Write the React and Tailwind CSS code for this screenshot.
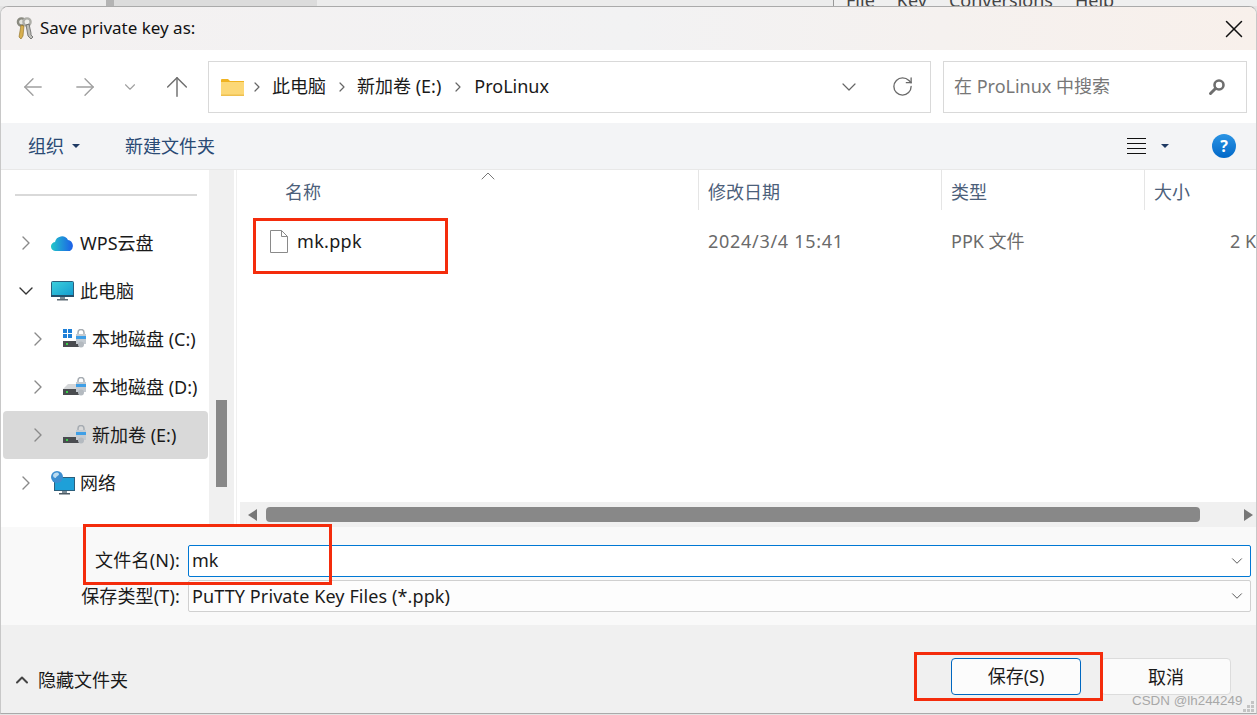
import React from 'react';
import { ArrowLeft, ArrowRight, ArrowUp, ChevronDown, ChevronRight, ChevronUp, RotateCw, X } from 'lucide-react';

const FONT = "font-['Noto_Sans','Noto_Sans_CJK_SC',sans-serif]";

const KeyIcon = () => (
  <svg width="20" height="24" viewBox="0 0 20 24">
    <circle cx="6.5" cy="5" r="3.6" fill="#e4e4de" stroke="#8a8a80" strokeWidth="2.4" />
    <circle cx="12" cy="5" r="3.6" fill="#f0f0ec" stroke="#aeaea8" strokeWidth="2.4" />
    <path d="M6 8l-2 12 2 2 2-3 1-10z" fill="#d8b050" stroke="#8a6a20" strokeWidth="0.6" />
    <path d="M11 8l2 11 3 3 2-2-2-2 0-2-2-9z" fill="#bdbdb8" stroke="#555" strokeWidth="0.7" />
  </svg>
);

const FolderIcon = () => (
  <svg width="23" height="18" viewBox="0 0 23 18">
    <path d="M0 2a1 1 0 0 1 1-1h6l2 2h14v2H0z" fill="#f0b322" />
    <path d="M0 4h23v13a1 1 0 0 1-1 1H1a1 1 0 0 1-1-1z" fill="#fcd877" />
    <rect y="16.5" width="23" height="1.5" fill="#eec050" />
  </svg>
);

const CloudIcon = () => (
  <svg width="24" height="18" viewBox="0 0 24 18">
    <defs>
      <linearGradient id="cloud" x1="0" x2="1" y1="0" y2="0">
        <stop offset="0" stopColor="#22c7c9" />
        <stop offset="1" stopColor="#1c5fe8" />
      </linearGradient>
    </defs>
    <path d="M5 17a4.500 4.500 0 0 1-1-9 7 7 0 0 1 13-2 6 6 0 0 1 2 11z" fill="url(#cloud)" />
  </svg>
);

const MonitorIcon = () => (
  <svg width="24" height="20" viewBox="0 0 24 20">
    <defs>
      <linearGradient id="screen" x1="0" x2="1" y1="0" y2="1">
        <stop offset="0" stopColor="#3dd0dc" />
        <stop offset="1" stopColor="#129ad0" />
      </linearGradient>
    </defs>
    <rect x="0.500" y="0.500" width="22" height="15" rx="1" fill="url(#screen)" stroke="#2c5f7c" />
    <rect x="0" y="14" width="23" height="2" fill="#24506c" />
    <rect x="9" y="16" width="5" height="2" fill="#7d8c96" />
    <rect x="6" y="18" width="11" height="1.500" fill="#5d6a74" />
  </svg>
);

const DriveIcon = ({ windows }) => (
  <svg width="24" height="20" viewBox="0 0 24 20">
    {windows ? (
      <g fill="#1d7fd8">
        <rect x="0" y="0" width="4" height="4" />
        <rect x="5" y="0" width="4" height="4" />
        <rect x="0" y="5" width="4" height="4" />
        <rect x="5" y="5" width="4" height="4" />
      </g>
    ) : (
      <path d="M0 12l5-5h11v5z" fill="#d4d6d8" />
    )}
    <rect x="0" y="12" width="16" height="6" fill="#4a4c50" />
    <rect x="3" y="14" width="2" height="2" fill="#39d048" />
    <path d="M15 6V3.500a3 3 0 0 1 6 0V6" fill="none" stroke="#a6acb2" strokeWidth="1.500" />
    <rect x="13" y="5" width="10" height="10" fill="#c4cad0" />
    <rect x="13" y="7" width="10" height="3" fill="#3f9fe6" />
    <circle cx="18" cy="15.500" r="3" fill="#b4bac0" />
  </svg>
);

const NetworkIcon = () => (
  <svg width="25" height="25" viewBox="0 0 25 25">
    <rect x="3.500" y="6.500" width="20" height="13" fill="#1ea0d8" stroke="#2c5f7c" />
    <rect x="11" y="20" width="5" height="2" fill="#7d8c96" />
    <rect x="8" y="22" width="11" height="1.500" fill="#4d5a64" />
    <circle cx="6" cy="6" r="6" fill="#3d8ed0" />
    <path d="M2 4c2-3 5-3 6-1 0 2-3 2-3 4-2 0-3-1-3-3z" fill="#bcdcf0" />
  </svg>
);

const FileIcon = () => (
  <svg width="18" height="23" viewBox="0 0 18 23">
    <path d="M0.500 0.500h11l6 6v16h-17z" fill="#fff" stroke="#8a8a8a" />
    <path d="M11.500 0.500v6h6" fill="none" stroke="#8a8a8a" />
  </svg>
);

const SearchIcon = () => (
  <svg width="18" height="18" viewBox="0 0 18 18">
    <circle cx="11" cy="7" r="4.500" fill="none" stroke="#6e6e6e" strokeWidth="2.600" />
    <path d="M7.500 10.500L2.500 15.500" stroke="#6e6e6e" strokeWidth="3" strokeLinecap="round" />
  </svg>
);

const GripIcon = () => (
  <svg width="12" height="12" viewBox="0 0 12 12" fill="#c4c4c4">
    <rect x="8" y="0" width="3" height="3" />
    <rect x="4" y="4" width="3" height="3" />
    <rect x="8" y="4" width="3" height="3" />
    <rect x="0" y="8" width="3" height="3" />
    <rect x="4" y="8" width="3" height="3" />
    <rect x="8" y="8" width="3" height="3" />
  </svg>
);

const Caret = ({ className }) => (
  <span className={`w-0 h-0 border-x-[4px] border-x-transparent border-t-[4px] border-t-[#1f3a64] ${className}`} />
);

const NavItem = ({ level, open, selected, icon, label }) => (
  <div className={`h-12 flex items-center whitespace-nowrap ${selected ? 'bg-[#d9d9d9] rounded-sm ml-[2px] w-[205px]' : ''}`}>
    <span className={`flex shrink-0 justify-center w-4 ${level ? (selected ? 'ml-[27px]' : 'ml-[29px]') : 'ml-[17px]'}`}>
      {open
        ? <ChevronDown size={24} strokeWidth={1.4} className="shrink-0 text-[#333]" />
        : <ChevronRight size={24} strokeWidth={1.4} className="shrink-0 text-[#8a8a8a]" />}
    </span>
    <span className="flex shrink-0 justify-start w-[29px] ml-[17px]">{icon}</span>
    <span className="text-[18px] text-[#1a1a1a]">{label}</span>
  </div>
);

const Column = ({ label, width, className = '' }) => (
  <div className={`h-full flex items-center pt-[5px] shrink-0 border-r border-[#e5e5e5] text-[18px] text-[#4c607a] ${width} ${className}`}>
    {label}
  </div>
);

const Annotation = ({ className }) => (
  <div className={`absolute border-[3px] border-[#f42c0c] pointer-events-none ${className}`} />
);

export default function App() {
  return (
    <div className={`relative w-[1257px] h-[715px] overflow-hidden bg-[#e4e4e4] ${FONT}`}>
      {/* PuTTYgen window behind the dialog, only its bottom edge shows */}
      <div className="h-[6px] overflow-hidden flex bg-[#e6e6e6]">
        <div className="w-[106px] bg-[#ececec]" />
        <div className="w-[8px] bg-[#b4b4b4]" />
        <div className="w-[203px] bg-[#dcdcdc]" />
        <div className="w-[516px] bg-[#ececec]" />
        <div className="flex-1 flex gap-[22px] pl-[12px] text-[18px] leading-[6px] text-[#444] bg-[#efefef] border-l border-[#999] items-start">
          <span className="-mt-[3px]">File</span>
          <span className="-mt-[3px]">Key</span>
          <span className="-mt-[3px]">Conversions</span>
          <span className="-mt-[3px]">Help</span>
        </div>
      </div>

      <div className="h-[708px] flex flex-col rounded-t-lg overflow-hidden border-t border-x border-b border-t-[#aaa] border-x-[#c8c8c8] border-b-[#aaa] bg-white">
        {/* title bar */}
        <div className="h-[43px] shrink-0 flex items-center bg-gradient-to-r from-[#f4f1f1] via-[#f2f2f3] to-[#f8f0eb]">
          <span className="ml-[14px] flex"><KeyIcon /></span>
          <span className="ml-[5px] pb-[2px] text-[17px] text-[#111]">Save private key as:</span>
          <X size={30} strokeWidth={1.2} className="ml-auto mr-[7px] text-[#111]" />
        </div>

        {/* nav bar */}
        <div className="h-[73px] shrink-0 flex items-center bg-white">
          <ArrowLeft size={28} strokeWidth={1.2} className="ml-[18px] text-[#a0a0a0]" />
          <ArrowRight size={28} strokeWidth={1.2} className="ml-[24px] text-[#a0a0a0]" />
          <ChevronDown size={18} strokeWidth={1.5} className="ml-[22px] text-[#a0a0a0]" />
          <ArrowUp size={32} strokeWidth={1.1} className="ml-[22px] text-[#707070]" />
          <div className="ml-[15px] w-[723px] h-[52px] flex items-center border border-[#d9d9d9] text-[18px] text-[#1a1a1a] whitespace-nowrap">
            <span className="ml-[12px] flex"><FolderIcon /></span>
            <ChevronRight size={16} strokeWidth={1.8} className="ml-[5px] text-[#666]" />
            <span className="ml-[7px]">此电脑</span>
            <ChevronRight size={16} strokeWidth={1.8} className="ml-[8px] text-[#666]" />
            <span className="ml-[7px]">新加卷 (E:)</span>
            <ChevronRight size={16} strokeWidth={1.8} className="ml-[9px] text-[#666]" />
            <span className="ml-[8px]">ProLinux</span>
            <ChevronDown size={24} strokeWidth={1.2} className="ml-auto text-[#666]" />
            <RotateCw size={23} strokeWidth={1.4} className="ml-[30px] mr-[16px] text-[#6a6a6a]" />
          </div>
          <div className="ml-[12px] w-[304px] h-[52px] flex items-center border border-[#d9d9d9] text-[18px] text-[#777] whitespace-nowrap">
            <span className="ml-[10px]">在 ProLinux 中搜索</span>
            <span className="ml-auto mr-[20px] flex"><SearchIcon /></span>
          </div>
        </div>

        {/* command bar */}
        <div className="h-[47px] shrink-0 flex items-center bg-[#f3f4f6] border-b border-[#e8e8e8] text-[18px] text-[#2a4a74] whitespace-nowrap">
          <span className="ml-[27px]">组织</span>
          <Caret className="ml-[8px]" />
          <span className="ml-[45px]">新建文件夹</span>
          <div className="ml-auto flex flex-col gap-[4px] w-[19px]">
            <span className="h-px bg-[#111]" />
            <span className="h-px bg-[#111]" />
            <span className="h-px bg-[#111]" />
            <span className="h-px bg-[#111]" />
          </div>
          <Caret className="ml-[15px]" />
          <span className="ml-[43px] mr-[20px] w-6 h-6 rounded-full bg-gradient-to-b from-[#2a94e4] to-[#0068c8] text-white text-[16px] font-bold leading-6 text-center">?</span>
        </div>

        {/* sidebar and file list */}
        <div className="h-[357px] shrink-0 flex">
          <div className="w-[208px] shrink-0 overflow-hidden">
            <div className="h-[49px] flex items-start">
              <div className="mt-[24px] ml-[14px] w-[182px] h-[2px] bg-[#d9d9d9]" />
            </div>
            <NavItem icon={<CloudIcon />} label="WPS云盘" />
            <NavItem open icon={<MonitorIcon />} label="此电脑" />
            <NavItem level={1} icon={<DriveIcon windows />} label="本地磁盘 (C:)" />
            <NavItem level={1} icon={<DriveIcon />} label="本地磁盘 (D:)" />
            <NavItem level={1} selected icon={<DriveIcon />} label="新加卷 (E:)" />
            <NavItem icon={<NetworkIcon />} label="网络" />
          </div>

          <div className="w-[25px] shrink-0 bg-[#f0f0f0] flex flex-col">
            <div className="ml-[7px] mt-[230px] w-[11px] h-[87px] bg-[#888]" />
          </div>

          <div className="flex-1 min-w-0 flex flex-col ml-[2px] border-l border-[#f0f0f0] overflow-hidden">
            <div className="h-[40px] shrink-0 flex">
              <Column
                label={
                  <>
                    <span className="ml-[48px]">名称</span>
                    <ChevronUp size={24} strokeWidth={1} className="absolute left-[239px] -top-[6px] text-[#777]" />
                  </>
                }
                width="w-[462px]"
                className="relative"
              />
              <Column label={<span className="ml-[9px]">修改日期</span>} width="w-[243px]" />
              <Column label={<span className="ml-[9px]">类型</span>} width="w-[203px]" />
              <div className="flex-1 h-full flex items-center pt-[5px] text-[18px] text-[#4c607a]">
                <span className="ml-[9px]">大小</span>
              </div>
            </div>
            <div className="flex-1 min-h-0">
              <div className="h-[62px] flex items-center whitespace-nowrap text-[18px] text-[#6a6a6a]">
                <div className="w-[462px] shrink-0 flex items-center">
                  <span className="ml-[33px] flex"><FileIcon /></span>
                  <span className="ml-[9px] text-[#1a1a1a] tracking-[0.3px]">mk.ppk</span>
                </div>
                <span className="w-[243px] shrink-0 pl-[9px] tracking-[0.7px]">2024/3/4 15:41</span>
                <span className="w-[203px] shrink-0 pl-[9px]">PPK 文件</span>
                <span className="pl-[85px]">2 KB</span>
              </div>
            </div>
            <div className="h-[25px] shrink-0 ml-[3px] bg-[#f0f0f0] flex items-center">
              <span className="ml-[8px] w-0 h-0 border-y-[6px] border-y-transparent border-r-[9px] border-r-[#777]" />
              <div className="ml-[9px] w-[934px] h-[15px] rounded-sm bg-[#888]" />
              <span className="ml-auto mr-[3px] w-0 h-0 border-y-[6px] border-y-transparent border-l-[9px] border-l-[#777]" />
            </div>
          </div>
        </div>

        {/* file name fields */}
        <div className="h-[98px] shrink-0 bg-[#f9f9f9] flex flex-col gap-[3px] pt-[18px] text-[18px] text-[#1a1a1a] whitespace-nowrap">
          <div className="flex items-center">
            <span className="w-[179px] pb-[2px] text-right tracking-[0.25px]">文件名(N):</span>
            <div className="ml-[8px] w-[1063px] h-[32px] flex items-center bg-white border border-[#0078d4] rounded-[2px]">
              <span className="ml-[3px] pb-[2px]">mk</span>
              <ChevronDown size={18} strokeWidth={1.3} className="ml-auto mr-[4px] text-[#555]" />
            </div>
          </div>
          <div className="flex items-center">
            <span className="w-[179px] text-right tracking-[0.15px]">保存类型(T):</span>
            <div className="ml-[8px] w-[1063px] h-[32px] flex items-center bg-[#fdfdfd] border border-[#d0d0d0] rounded-[2px]">
              <span className="ml-[3px] tracking-[0.1px]">PuTTY Private Key Files (*.ppk)</span>
              <ChevronDown size={18} strokeWidth={1.3} className="ml-auto mr-[4px] text-[#555]" />
            </div>
          </div>
        </div>

        {/* footer */}
        <div className="flex-1 bg-[#f0f0f0] flex items-center text-[18px] text-[#1a1a1a] whitespace-nowrap">
          <ChevronUp size={20} strokeWidth={2.4} className="ml-[11px] text-[#444] mt-[22px]" />
          <span className="ml-[6px] mt-[22px]">隐藏文件夹</span>
          <button className="ml-auto mt-[14px] pt-[1px] w-[130px] h-[37px] rounded-[4px] bg-[#fcfcfc] border border-[#0067c0]">保存(S)</button>
          <button className="ml-[20px] mr-[25px] mt-[14px] pt-[3px] w-[130px] h-[37px] rounded-[4px] bg-[#fbfbfb] border border-[#dcdcdc]">取消</button>
        </div>
      </div>

      {/* red marks drawn over the screenshot */}
      <Annotation className="left-[253px] top-[218px] w-[195px] h-[56px]" />
      <Annotation className="left-[83px] top-[524px] w-[249px] h-[61px]" />
      <Annotation className="left-[914px] top-[652px] w-[189px] h-[49px]" />

      <span className="absolute left-[1132px] top-[691px] text-[13.4px] text-[#a8a8a8] font-['Liberation_Sans',sans-serif]">CSDN @lh244249</span>
      <span className="absolute right-[2px] bottom-[2px] flex"><GripIcon /></span>
    </div>
  );
}
